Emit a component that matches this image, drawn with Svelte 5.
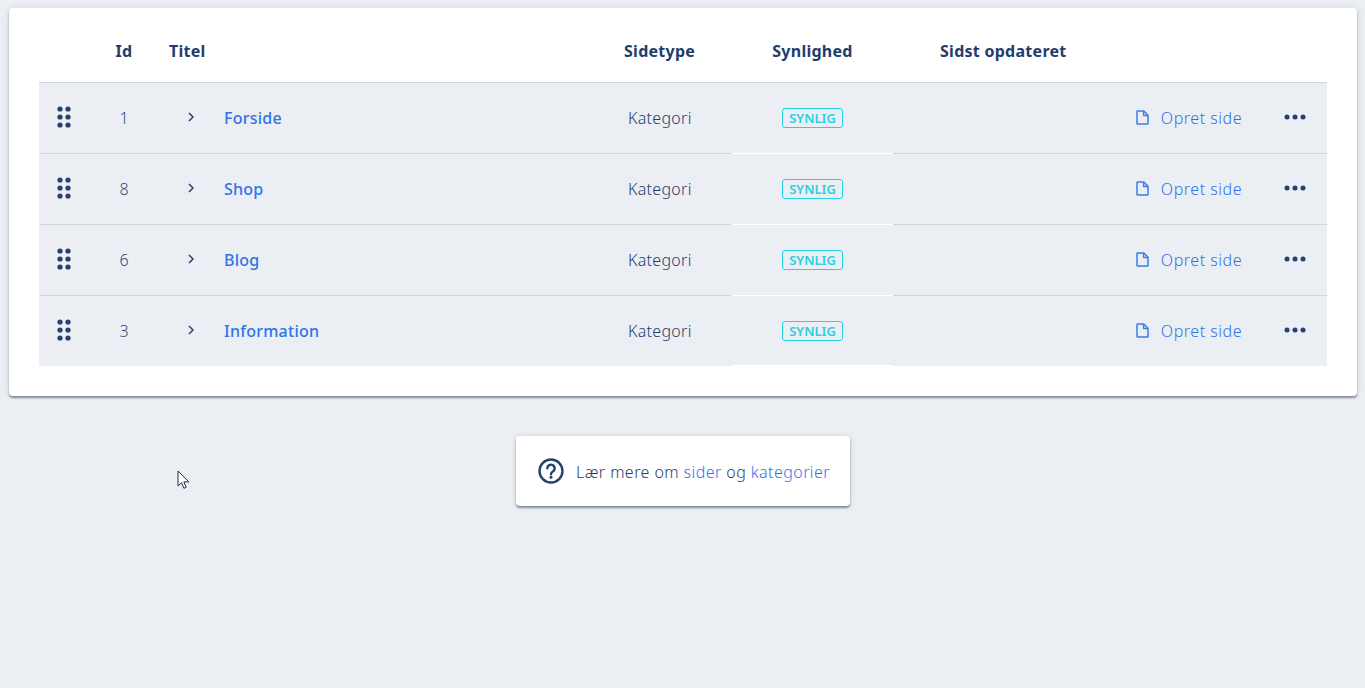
<script>
  const rows = [
    { id: 1, title: "Forside" },
    { id: 8, title: "Shop" },
    { id: 6, title: "Blog" },
    { id: 3, title: "Information" }
  ];
</script>

<div class="page">
  <section class="card">
    <div class="row head">
      <div></div>
      <div class="id">Id</div>
      <div class="title">Titel</div>
      <div class="type">Sidetype</div>
      <div class="vis">Synlighed</div>
      <div class="updated">Sidst opdateret</div>
      <div></div>
    </div>
    {#each rows as row}
      <div class="row item">
        <div class="drag">
          <svg width="14" height="22" viewBox="0 0 14 22" fill="#24416f">
            <circle cx="3" cy="3" r="2.6" /><circle cx="11" cy="3" r="2.6" />
            <circle cx="3" cy="11" r="2.6" /><circle cx="11" cy="11" r="2.6" />
            <circle cx="3" cy="19" r="2.6" /><circle cx="11" cy="19" r="2.6" />
          </svg>
        </div>
        <div class="id num">{row.id}</div>
        <div class="title name">
          <svg class="chev" width="6" height="10" viewBox="0 0 6 10" fill="none" stroke="#24416f" stroke-width="1.5">
            <path d="M1 1l4 4-4 4" />
          </svg>
          <a href="#top">{row.title}</a>
        </div>
        <div class="type kind">Kategori</div>
        <div class="vis cell-vis"><span class="badge">SYNLIG</span></div>
        <div class="updated"></div>
        <div class="actions">
          <a class="create" href="#top">
            <svg width="13" height="15" viewBox="0 0 13 15" fill="none" stroke="#3b7dea" stroke-width="1.5" stroke-linejoin="round">
              <path d="M1 1.6c0-.3.3-.6.6-.6h6.2L12 5.2v8.200c0 .3-.3.6-.6.6H1.600c-.3 0-.6-.3-.6-.6z" />
              <path d="M7.600 1v4.400H12" />
            </svg>
            Opret side
          </a>
          <svg class="more" width="22" height="6" viewBox="0 0 22 6" fill="#24416f">
            <circle cx="3" cy="3" r="2.500" /><circle cx="11" cy="3" r="2.500" /><circle cx="19" cy="3" r="2.500" />
          </svg>
        </div>
      </div>
    {/each}
  </section>

  <div class="help">
    <svg width="26" height="26" viewBox="0 0 26 26" fill="none" stroke="#24416f" stroke-width="2.400">
      <circle cx="13" cy="13" r="11.500" />
      <path d="M9.300 10.300a3.700 3.700 0 1 1 5.600 3.200c-1.200.7-1.900 1.300-1.900 2.700" stroke-linecap="round" />
      <circle cx="13" cy="19.300" r="1.500" fill="#24416f" stroke="none" />
    </svg>
    <p>Lær mere om <a href="#top">sider</a> og <a href="#top">kategorier</a></p>
  </div>

  <svg class="cursor" width="14" height="20" viewBox="0 0 14 20">
    <path d="M1 1v15l3.500-3.300 2.400 5.600 2.300-1-2.400-5.400h5z" fill="#fff" stroke="#1d2a4a" stroke-width="1" />
  </svg>
</div>

<style>
  :global(body) {
    background: #ebeef3;
    color: #1f3d6b;
    font-family: "Noto Sans", "Open Sans", Arial, sans-serif;
    font-size: 16px;
    font-weight: 300;
  }
  .page {
    position: relative;
    height: 688px;
    padding: 8px 8px 0 9px;
    box-sizing: border-box;
    overflow: hidden;
  }
  .card {
    background: #fff;
    border-radius: 4px;
    padding: 0 30px 30px;
    height: 388px;
    box-sizing: border-box;
    box-shadow: 0 2px 2px rgba(60, 70, 90, 0.55), 0 0 6px rgba(60, 70, 90, 0.12);
  }
  .row {
    display: grid;
    grid-template-columns: 61px 48px 456px 128px 161px 1fr 260px;
    align-items: center;
  }
  .head {
    height: 75px;
    padding-top: 12px;
    box-sizing: border-box;
    border-bottom: 1px solid #cdd5df;
    font-weight: 700;
    color: #1f3d6b;
    letter-spacing: 0.27px;
  }
  .item {
    height: 71px;
    background: #ebeef3;
    border-bottom: 1px solid #d0d5dc;
    box-sizing: border-box;
  }
  .item:last-child {
    height: 70px;
    border-bottom: 0;
  }
  .drag {
    display: flex;
    padding-left: 18px;
    margin-top: -2px;
  }
  .id {
    text-align: center;
  }
  .num {
    color: #2f4f80;
  }
  .title {
    padding-left: 21px;
  }
  .name {
    display: flex;
    align-items: center;
    gap: 30px;
    padding-left: 40px;
    font-weight: 500;
    letter-spacing: 0.25px;
    margin-top: -1px;
  }
  .chev {
    flex: none;
    margin-top: -1px;
  }
  a {
    color: #2f74e8;
    text-decoration: none;
  }
  .type {
    padding-left: 20px;
  }
  .kind {
    padding-left: 24px;
    letter-spacing: 0.3px;
  }
  .vis {
    text-align: center;
  }
  .cell-vis {
    align-self: stretch;
    display: flex;
    align-items: center;
    justify-content: center;
    border-bottom: 1px solid #fff;
    margin-bottom: -1px;
  }
  .item:last-child .cell-vis {
    margin-bottom: 0;
  }
  .badge {
    border: 1px solid #22d3e6;
    border-radius: 3px;
    color: #2ccfe0;
    font-size: 13px;
    font-weight: 600;
    line-height: 18px;
    padding: 0 6px;
  }
  .updated {
    padding-left: 47px;
  }
  .actions {
    display: flex;
    align-items: center;
    justify-content: flex-end;
    gap: 42px;
    padding-right: 21px;
    margin-top: -1px;
  }
  .create {
    display: flex;
    align-items: center;
    gap: 12px;
    letter-spacing: 0.52px;
  }
  .create svg {
    margin-left: -2px;
    margin-top: -1px;
  }
  .more {
    margin-top: -1px;
  }
  .help {
    width: 334px;
    height: 70px;
    margin: 40px auto 0;
    background: #fff;
    border-radius: 4px;
    box-shadow: 0 2px 2px rgba(60, 70, 90, 0.55), 0 0 6px rgba(60, 70, 90, 0.12);
    display: flex;
    align-items: center;
    gap: 12px;
    padding-left: 22px;
    box-sizing: border-box;
  }
  .help p {
    margin: 1px 0 0;
    letter-spacing: 0.43px;
  }
  .cursor {
    position: absolute;
    left: 177px;
    top: 470px;
  }
</style>
